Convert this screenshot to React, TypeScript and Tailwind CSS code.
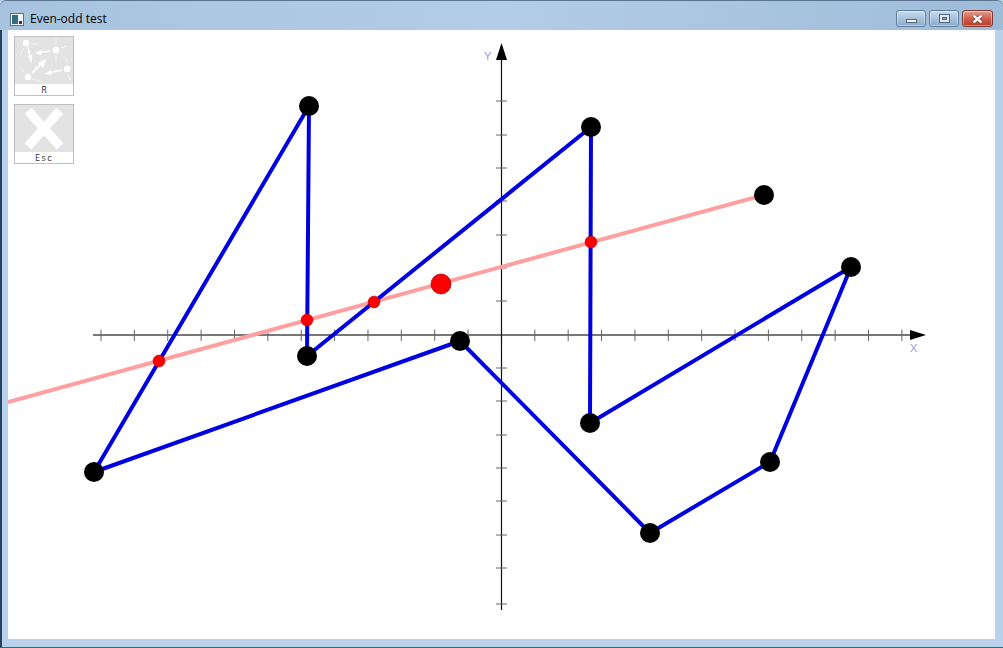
import React from 'react';

/* ---------- data ---------- */
const POLYGON = '94,472 309,106 307,356 591,127 590,423 851,267 770,462 650,533 460,341';
const VERTICES = [
  [94, 472], [309, 106], [307, 356], [591, 127], [590, 423],
  [851, 267], [770, 462], [650, 533], [460, 341], [764, 195],
];
const HITS = [[159, 361], [307, 320], [374, 302], [591, 242]];
const X_TICKS = Array.from({ length: 25 }, (_, i) => 101 + i * 33.37);
const Y_TICKS = [101, 135, 168, 201, 235, 268, 301, 368, 401, 435, 468, 501, 535, 568, 604];

/* ---------- toolbar icons ---------- */
const NodesIcon = () => (
  <svg viewBox="0 0 58 47" className="w-full h-full bg-[#e3e3e3]">
    <g stroke="#fff" fill="#fff">
      <circle cx="11" cy="6" r="3.2" strokeWidth="0" />
      <circle cx="41" cy="13" r="3.2" strokeWidth="0" />
      <circle cx="52" cy="32" r="3.2" strokeWidth="0" />
      <circle cx="13" cy="40" r="3.2" strokeWidth="0" />
      <path d="M35 14 L22 16" strokeWidth="1.5" />
      <path d="M20 16 L27 13 L26 18 Z" strokeWidth="0" />
      <path d="M13 10 L16 24" strokeWidth="1.5" />
      <path d="M17 26 L13 19 L17 18 Z" strokeWidth="0" />
      <path d="M17 36 L29 24" strokeWidth="2" />
      <path d="M31 22 L28 31 L23 26 Z" strokeWidth="0" />
      <path d="M47 33 L33 36" strokeWidth="1.5" />
      <path d="M29 37 L36 33 L36 38 Z" strokeWidth="0" />
      <g strokeWidth="0.8" opacity="0.8">
        <path d="M16 6 L24 8" />
        <path d="M9 11 L5 18" />
        <path d="M41 18 L41 25" />
        <path d="M41 7 L41 1" />
        <path d="M46 11 L52 9" />
        <path d="M52 26 L51 21" />
        <path d="M53 37 L55 44" />
        <path d="M9 35 L5 30" />
        <path d="M18 42 L26 45" />
      </g>
    </g>
  </svg>
);

const CrossIcon = () => (
  <svg viewBox="0 0 58 47" className="w-full h-full bg-[#e3e3e3]">
    <path d="M16 9 L42 38 M42 9 L16 38" stroke="#fff" strokeWidth="9" strokeLinecap="square" />
  </svg>
);

const ToolButton: React.FC<{ label: string; spaced?: boolean; children: React.ReactNode }> = ({ label, spaced, children }) => (
  <div className="w-[60px] h-[60px] border border-[#c0c0c0] bg-white flex flex-col">
    <div className="h-[47px] shrink-0">{children}</div>
    <div className={`flex-1 flex items-center justify-center text-[9px] leading-none text-[#333] ${spaced ? 'tracking-[1.5px]' : ''}`}>
      {label}
    </div>
  </div>
);

/* ---------- window buttons ---------- */
const CaptionButton: React.FC<{ className: string; children: React.ReactNode }> = ({ className, children }) => (
  <div className={`h-[17px] rounded-[3px] border border-[#5f7c9c] flex items-center justify-center shadow-[inset_0_0_0_1px_rgba(255,255,255,0.4)] ${className}`}>
    {children}
  </div>
);

export default function App() {
  return (
    <div className="w-[1003px] h-[648px] overflow-hidden flex flex-col bg-[#b9d1ea] border-b border-[#2b6f78] font-['Open_Sans','Noto_Sans',sans-serif]">
      {/* title bar */}
      <div className="h-[30px] shrink-0 flex items-start justify-between pl-[10px] pr-[10px] bg-gradient-to-r from-[#a6c3df] via-[#b4cde6] to-[#9dbcd9] rounded-t-[6px] border-t border-[#5a7590]">
        <div className="flex items-center gap-[6px] pt-[10px]">
          <svg width="14" height="13" viewBox="0 0 14 13" className="shrink-0">
            <rect x="0.5" y="0.5" width="13" height="12" fill="#f4f7fa" stroke="#5c6f80" />
            <rect x="2" y="2" width="6" height="9" fill="#2f6f7f" />
            <rect x="9" y="8" width="3" height="3" fill="#2a3c50" />
          </svg>
          <span className="text-[12px] leading-[16px] text-black">Even-odd test</span>
        </div>
        <div className="flex gap-[3px] pt-[9px]">
          <CaptionButton className="w-[30px] bg-gradient-to-b from-[#c9dbec] via-[#a9c3dc] to-[#8aa9c8]">
            <div className="w-[11px] h-[4px] mt-[5px] bg-white border border-[#50647a]" />
          </CaptionButton>
          <CaptionButton className="w-[30px] bg-gradient-to-b from-[#c9dbec] via-[#a9c3dc] to-[#8aa9c8]">
            <div className="w-[11px] h-[9px] bg-[#dfe8f0] border border-[#50647a] flex items-center justify-center">
              <div className="w-[5px] h-[3px] bg-[#8aa9c8] border border-[#50647a]" />
            </div>
          </CaptionButton>
          <CaptionButton className="w-[31px] border-[#7c3a30] bg-gradient-to-b from-[#e3a090] via-[#cf5f4c] to-[#b8392a]">
            <svg width="13" height="10" viewBox="0 0 13 10">
              <path d="M2.5 1.5 L10.5 8.5 M10.5 1.5 L2.5 8.5" stroke="#4b2a26" strokeWidth="3.6" />
              <path d="M2.5 1.5 L10.5 8.5 M10.5 1.5 L2.5 8.5" stroke="#fff" strokeWidth="2.4" />
            </svg>
          </CaptionButton>
        </div>
      </div>

      {/* client area */}
      <div className="flex-1 min-h-0 pl-[8px] pr-[8px] pb-[8px] border-l-2 border-[#24435f]">
        <div className="relative w-[987px] h-[609px] -ml-[2px] bg-white">
          <svg viewBox="8 30 987 609" width="987" height="609" className="block">
            {/* axes */}
            <line x1="93" y1="335" x2="912" y2="335" stroke="#777" strokeWidth="2" />
            {X_TICKS.map((x) => (
              <line key={x} x1={x} y1="329.5" x2={x} y2="341" stroke="#666" strokeWidth="1" />
            ))}
            <path d="M910 330 L926 335 L910 340 Z" fill="#000" />
            <line x1="501.5" y1="58" x2="501.5" y2="610" stroke="#111" strokeWidth="1.2" />
            {Y_TICKS.map((y) => (
              <line key={y} x1="496" y1={y} x2="507" y2={y} stroke="#666" strokeWidth="1" />
            ))}
            <path d="M501.5 43 L507 60 L496 60 Z" fill="#000" />
            <text x="484" y="60" fontSize="11" fill="#9a9ad6" fontFamily="'Liberation Sans', sans-serif">Y</text>
            <text x="910" y="352" fontSize="11" fill="#9a9ad6" fontFamily="'Liberation Sans', sans-serif">X</text>

            {/* test ray */}
            <line x1="8" y1="402" x2="764" y2="195" stroke="#ff9f9f" strokeWidth="4" />

            {/* polygon */}
            <polygon points={POLYGON} fill="none" stroke="#0000e0" strokeWidth="4" strokeLinejoin="round" />

            {/* vertices */}
            {VERTICES.map(([x, y]) => (
              <circle key={`${x}-${y}`} cx={x} cy={y} r="10" fill="#000" />
            ))}

            {/* intersections */}
            {HITS.map(([x, y]) => (
              <circle key={`${x}-${y}`} cx={x} cy={y} r="6" fill="#ff0000" stroke="#a00000" strokeWidth="0.5" />
            ))}
            <circle cx="441" cy="284" r="10" fill="#ff0000" stroke="#900000" strokeWidth="0.7" />
          </svg>

          {/* toolbar over canvas */}
          <div className="absolute left-[6px] top-[6px] flex flex-col gap-[8px]">
            <ToolButton label="R"><NodesIcon /></ToolButton>
            <ToolButton label="Esc" spaced><CrossIcon /></ToolButton>
          </div>
        </div>
      </div>
    </div>
  );
}
